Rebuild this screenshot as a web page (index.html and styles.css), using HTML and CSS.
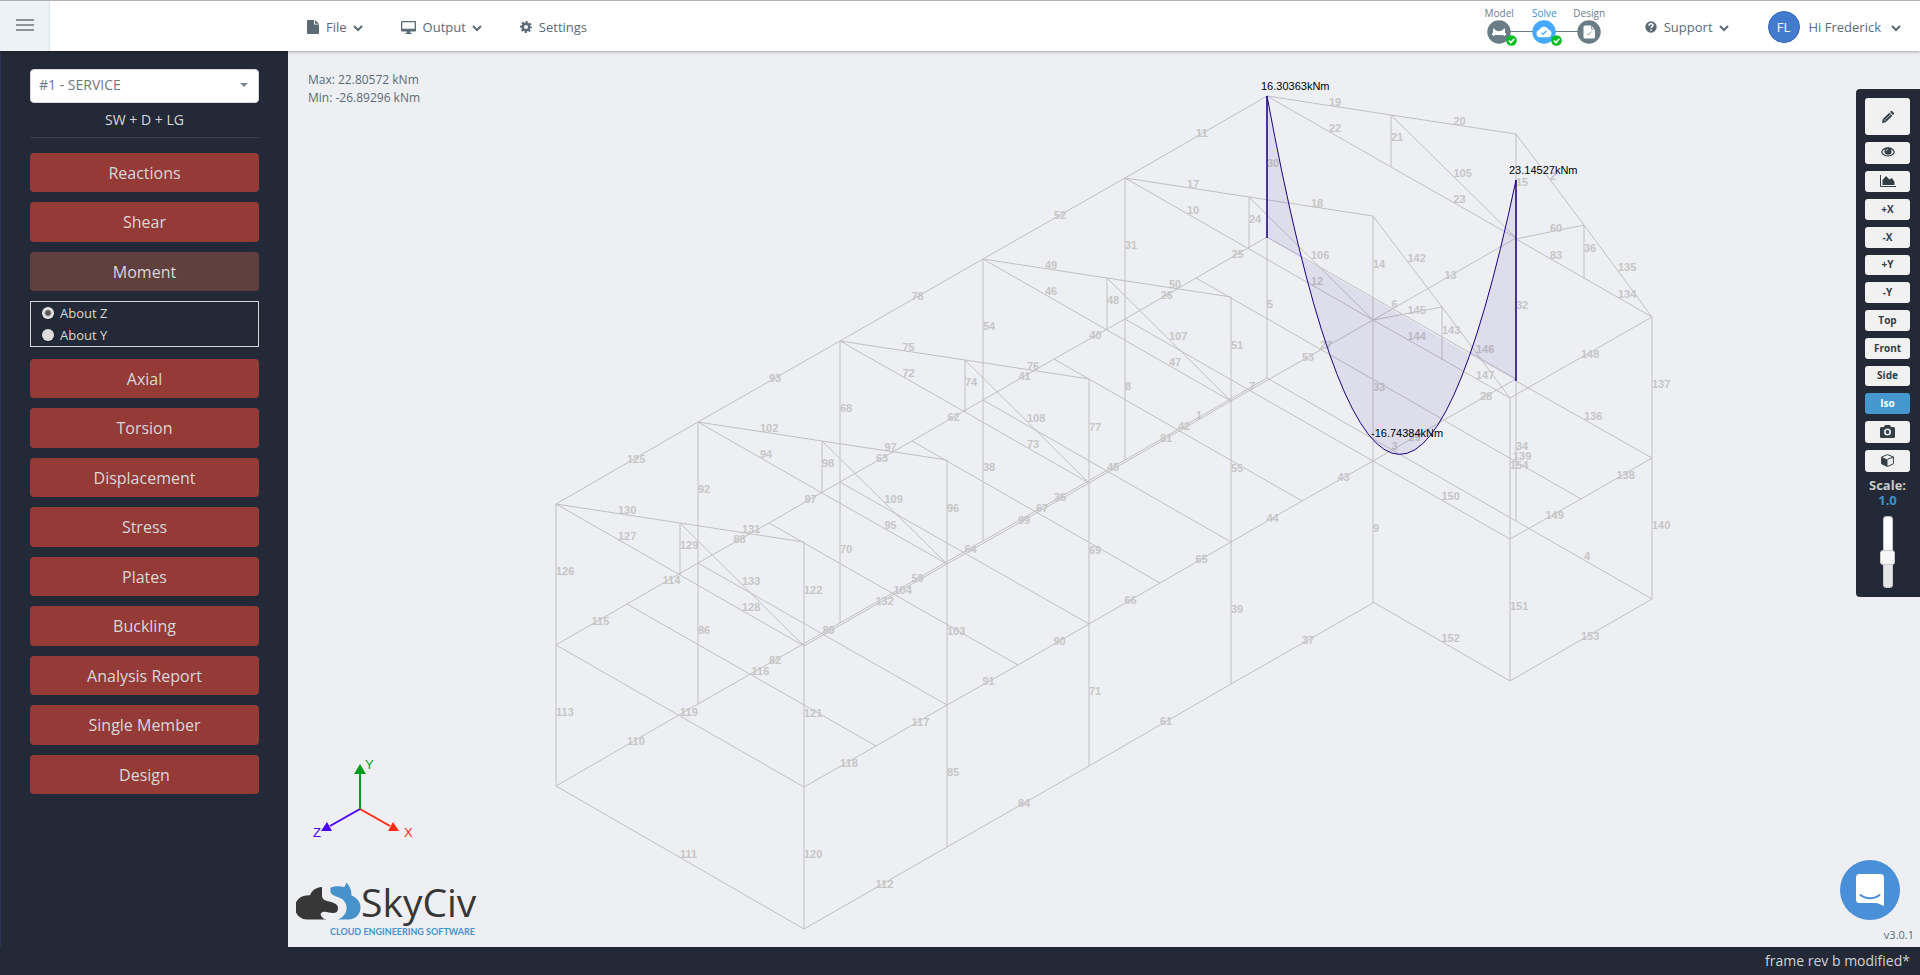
FILE: index.html
```html
<!DOCTYPE html>
<html lang="en">
<head>
  <meta charset="UTF-8">
  <meta name="viewport" content="width=device-width, initial-scale=1.0">
  <title>SkyCiv Structural 3D</title>
  <link rel="stylesheet" href="styles.css">
</head>
<body>

  <!-- shared icons -->
  <svg class="sprite" aria-hidden="true">
    <symbol id="chevron" viewBox="0 0 10 8"><path d="M1 2l4 4 4-4" fill="none" stroke="currentColor" stroke-width="2"/></symbol>
    <symbol id="tick" viewBox="0 0 11 11"><circle cx="5.500" cy="5.500" r="5.300" fill="#00be1f"/><path d="M2.800 5.500l2 2 3.500-3.600" fill="none" stroke="#fff" stroke-width="1.600"/></symbol>
  </svg>

  <header class="topbar">
    <button class="menu-toggle" aria-label="Toggle menu"><span></span><span></span><span></span></button>

    <nav class="menu">
      <a href="#">
        <svg width="12" height="14" viewBox="0 0 12 14"><path d="M1 0h6v4.500h5V13a1 1 0 0 1-1 1H1a1 1 0 0 1-1-1V1a1 1 0 0 1 1-1zM8 0l4 3.700H8z" fill="currentColor"/></svg>
        <span>File</span>
        <svg class="chevron" width="10" height="8"><use href="#chevron"/></svg>
      </a>
      <a href="#">
        <svg width="15" height="13" viewBox="0 0 15 13"><path d="M1 0h13a1 1 0 0 1 1 1v8.500a1 1 0 0 1-1 1H9l.5 1.500h1v1h-6v-1h1l.5-1.500H1a1 1 0 0 1-1-1V1a1 1 0 0 1 1-1zm.3 1.200v6.500h12.400V1.200z" fill="currentColor" fill-rule="evenodd"/></svg>
        <span>Output</span>
        <svg class="chevron" width="10" height="8"><use href="#chevron"/></svg>
      </a>
      <a href="#">
        <svg width="12" height="12" viewBox="0 0 12 12"><circle cx="6" cy="6" r="3.300" fill="none" stroke="currentColor" stroke-width="2.600"/><circle cx="6" cy="6" r="5" fill="none" stroke="currentColor" stroke-width="2" stroke-dasharray="2.100 1.827" stroke-dashoffset="1.050"/></svg>
        <span>Settings</span>
      </a>
    </nav>

    <div class="steps">
      <a class="step" href="#">
        <span>Model</span>
        <svg width="24" height="24" viewBox="0 0 24 24"><circle cx="12" cy="12" r="11.700" fill="currentColor"/><path d="M5 13h14v2H5zM6 8.500h1.500V16H6zM16.500 8.500H18V16h-1.500zM7.500 9.500q4.500 3.500 9 0v4h-9z" fill="#fff"/></svg>
        <svg class="tick" width="11" height="11"><use href="#tick"/></svg>
      </a>
      <a class="step active" href="#">
        <span>Solve</span>
        <svg width="24" height="24" viewBox="0 0 24 24"><circle cx="12" cy="12" r="11.700" fill="currentColor"/><path d="M8 17.200a3.600 3.600 0 0 1-.7-7.100 5 5 0 0 1 9.300-.3 3.800 3.800 0 0 1-.2 7.400z" fill="#fff"/><path d="M9.500 12.700l1.800 1.700 3.200-3.800" fill="none" stroke="currentColor" stroke-width="1.200"/></svg>
        <svg class="tick" width="11" height="11"><use href="#tick"/></svg>
      </a>
      <a class="step" href="#">
        <span>Design</span>
        <svg width="24" height="24" viewBox="0 0 24 24"><circle cx="12" cy="12" r="11.700" fill="currentColor"/><path d="M8 5.500h6l4 4v7.500a1.500 1.500 0 0 1-1.500 1.500H8A1.500 1.500 0 0 1 6.500 17V7A1.500 1.500 0 0 1 8 5.500z" fill="#fff"/><path d="M14.500 6v3H18M10 13.500l1.500 1.500 3-3.500" fill="none" stroke="currentColor" stroke-width=".8"/></svg>
      </a>
    </div>

    <a class="support" href="#">
      <svg width="12" height="12" viewBox="0 0 12 12"><circle cx="6" cy="6" r="5.700" fill="currentColor"/><path d="M4 4.700c0-2.700 4-2.600 4-.3 0 1.300-1.900 1.300-1.900 2.700M6.100 8.200v1.500" fill="none" stroke="#fff" stroke-width="1.500"/></svg>
      <span>Support</span>
      <svg class="chevron" width="10" height="8"><use href="#chevron"/></svg>
    </a>

    <a class="account" href="#">
      <span class="avatar">FL</span>
      <span>Hi Frederick</span>
      <svg class="chevron" width="10" height="8"><use href="#chevron"/></svg>
    </a>
  </header>

  <main class="workspace">
    <aside class="sidebar">
      <div class="load-combo">
        <select id="combo" aria-label="Load combination">
          <option>#1 - SERVICE</option>
        </select>
      </div>
      <p class="combo-desc">SW + D + LG</p>

      <div class="results">
        <button>Reactions</button>
        <button>Shear</button>
        <button class="selected">Moment</button>
        <div class="axis-choice" role="radiogroup" aria-label="Moment axis">
          <label><input type="radio" name="axis" checked>About Z</label>
          <label><input type="radio" name="axis">About Y</label>
        </div>
        <button>Axial</button>
        <button>Torsion</button>
        <button>Displacement</button>
        <button>Stress</button>
        <button>Plates</button>
        <button>Buckling</button>
        <button>Analysis Report</button>
        <button>Single Member</button>
        <button>Design</button>
      </div>
    </aside>

    <section class="viewer">
      <svg class="model" id="model">
        <g id="members"></g>
        <g id="member-ids"></g>
        <g id="diagram"></g>
      </svg>

      <div class="extremes">
        <div>Max: 22.80572 kNm</div>
        <div>Min: -26.89296 kNm</div>
      </div>

      <div class="branding">
        <svg class="triad" width="100" height="84" viewBox="0 0 100 84">
          <g stroke-width="2">
            <path d="M52 50L82 67" stroke="#ff2a12"/>
            <path d="M52 50L22 67" stroke="#4b00ff"/>
            <path d="M52 50V12" stroke="#069c1e"/>
          </g>
          <path d="M52 5l6 10H46z" fill="#069c1e"/>
          <path d="M85 63l6 9H80z" fill="#ff2a12"/>
          <path d="M19 63l5 9H13z" fill="#4b00ff"/>
          <text x="57" y="10" fill="#069c1e">Y</text>
          <text x="96" y="78" fill="#ff2a12">X</text>
          <text x="5" y="78" fill="#4b00ff">Z</text>
        </svg>

        <svg class="logo" width="190" height="68" viewBox="0 -8 190 68">
          <path d="M12 38.500a11.500 11.500 0 0 1-2-24 12 12 0 0 1 4-.2C16 9 20 6.500 26 6v9c0 4 5 5 9 6 5 1.500 7 3 7 6.500 0 3-2 4.500-5 4.500-4 0-7-2-10-1-3 .8-3 3-1 5 1 1 2 2.500 6 2.500z" fill="#373737"/>
          <path d="M42 38.500c7-3 10-9 8-15-2-6-7-7-12-9-3-1-4-4-3.500-7.500 2-2 9-2 14-1l2-4.500c2 3 5 5 5 13 5 2 9 6 9 12 0 7-5 12-12 12z" fill="#4792ca"/>
          <text class="logo-name" x="65" y="36">SkyCiv</text>
          <text class="logo-tag" x="34" y="54">CLOUD ENGINEERING SOFTWARE</text>
        </svg>
      </div>

      <div class="view-tools">
        <button class="edit" aria-label="Edit"><svg width="12" height="12" viewBox="0 0 12 12"><path d="M0 12l.7-3.700 6.600-6.600 3 3-6.600 6.600zM8 1l1-1h1l2 2v1l-1 1z" fill="currentColor"/><path d="M2 8.500l1.500 1.500M3.500 8.500l5-5" stroke="#f0f0f0" stroke-width=".7"/></svg></button>
        <button class="icon" aria-label="Visibility"><svg width="14" height="10" viewBox="0 0 14 10"><path d="M.6 5C3-.5 11-.5 13.400 5 11 10.300 3 10.300.6 5z" fill="none" stroke="currentColor" stroke-width="1.100"/><circle cx="7" cy="4.200" r="3.500" fill="currentColor"/><path d="M5.400 4c0-1 .6-1.600 1.600-1.600" fill="none" stroke="#f0f0f0" stroke-width=".8"/></svg></button>
        <button aria-label="Charts"><svg width="16" height="12" viewBox="0 0 16 12"><path d="M.5 0v11.500H16" fill="none" stroke="currentColor"/><path d="M2.500 10V5L6 1l3.500 3.500L12 3l2.500 4v3z" fill="currentColor"/></svg></button>
        <button>+X</button>
        <button>-X</button>
        <button>+Y</button>
        <button>-Y</button>
        <button>Top</button>
        <button>Front</button>
        <button>Side</button>
        <button class="on">Iso</button>
        <button class="icon" aria-label="Screenshot"><svg width="15" height="13" viewBox="0 0 15 13"><path d="M1.500 2H4l1-2h5l1 2h2.500A1.500 1.500 0 0 1 15 3.500v8a1.500 1.500 0 0 1-1.500 1.500h-12A1.500 1.500 0 0 1 0 11.500v-8A1.500 1.500 0 0 1 1.500 2z" fill="currentColor"/><circle cx="7.500" cy="7" r="2.700" fill="none" stroke="#f0f0f0" stroke-width="1.600"/></svg></button>
        <button class="icon" aria-label="3D render"><svg width="13" height="13" viewBox="0 0 13 13"><path d="M6.500.6L12.400 3v6.800l-5.900 2.700L.6 9.800V3z" fill="none" stroke="currentColor"/><path d="M.5 3l6 2.400v7L.5 9.800z" fill="currentColor"/><path d="M6.500 5.400L12.400 3" stroke="currentColor"/></svg></button>
        <label class="scale-label" for="scale">Scale:<output>1.0</output></label>
        <input class="scale" id="scale" type="range" min="0" max="2" step="0.1" value="0.8">
      </div>

      <button class="chat" aria-label="Open chat">
        <svg width="28" height="32" viewBox="0 0 28 32"><path d="M3.500 0h21A3.500 3.500 0 0 1 28 3.500V32c-3-1-5.500-3-9-3H3.500A3.500 3.500 0 0 1 0 25.500v-22A3.500 3.500 0 0 1 3.500 0z" fill="#fff"/><path d="M4.500 21c5 4.300 14 4.300 19 0" fill="none" stroke="#4a90d9" stroke-width="2" stroke-linecap="round"/></svg>
      </button>
      <div class="version">v3.0.1</div>
    </section>
  </main>

  <footer class="statusbar">frame rev b modified*</footer>

  <script src="model.js"></script>
</body>
</html>
```
FILE: styles.css
```css
* {
  box-sizing: border-box;
}

body {
  display: flex;
  flex-direction: column;
  height: 100vh;
  margin: 0;
  overflow: hidden;
  font-family: "Open Sans", sans-serif;
  font-size: 13px;
  line-height: 18px;
  color: #5a6b75;
  background-color: #232936;
}

a {
  color: inherit;
  text-decoration: none;
}

button {
  font-family: inherit;
  border: none;
  cursor: pointer;
}

svg {
  flex: none;
}

.sprite {
  position: absolute;
  width: 0;
  height: 0;
}

/* top bar */

.topbar {
  position: relative;
  z-index: 2;
  display: flex;
  align-items: center;
  height: 51px;
  background-color: #fff;
  border-top: 1px solid #b3b0b3;
  box-shadow: 0 1px 3px rgba(0, 0, 0, 0.3);
}

.menu-toggle {
  display: flex;
  flex-direction: column;
  align-items: center;
  justify-content: center;
  gap: 3px;
  width: 50px;
  height: 50px;
  padding: 0 0 2px;
  background-color: #ecf2f5;
  border-right: 1px solid #d8dfee;
}

.menu-toggle span {
  width: 18px;
  height: 2px;
  background-color: #8e9396;
}

.menu {
  display: flex;
  gap: 38px;
  margin-left: 257px;
}

.menu a,
.support,
.account {
  display: flex;
  align-items: center;
  gap: 7px;
  padding-top: 2px;
}

.chevron {
  margin: 2px 0 0 -1px;
}

.steps {
  position: relative;
  display: flex;
  height: 50px;
  margin-left: auto;
}

.steps::before {
  content: "";
  position: absolute;
  top: 30px;
  left: 22px;
  right: 22px;
  height: 1px;
  background-color: #6a7d87;
}

.step {
  position: relative;
  display: flex;
  flex-direction: column;
  align-items: center;
  width: 45px;
  padding-top: 5px;
  font-size: 10px;
  line-height: 14px;
  color: #6a7d87;
}

.step.active {
  color: #45aaff;
}

.step.active span {
  color: #3a90cc;
}

.step .tick {
  position: absolute;
  left: 29px;
  top: 34px;
}

.support {
  margin-left: 33px;
}

.account {
  gap: 9px;
  margin: 0 19px 0 39px;
}

.account .chevron {
  margin-left: 1px;
}

.avatar {
  width: 32px;
  height: 32px;
  border: 1px solid #3568b8;
  border-radius: 50%;
  line-height: 30px;
  text-align: center;
  color: #fff;
  background-color: #427bcd;
}

/* result buttons */

.workspace {
  display: flex;
  flex: 1;
  min-height: 0;
}

.sidebar {
  flex: none;
  width: 288px;
  padding: 18px 29px;
  border-left: 1px solid #2b3350;
  color: #d9d9d9;
}

.load-combo {
  position: relative;
}

.load-combo::after {
  content: "";
  position: absolute;
  top: 14px;
  right: 11px;
  border: 4px solid transparent;
  border-top-color: #7b878e;
}

.load-combo select {
  display: block;
  width: 100%;
  height: 34px;
  padding: 0 8px 3px;
  appearance: none;
  font-family: inherit;
  font-size: 14px;
  color: #6a7a83;
  background-color: #fff;
  border: 1px solid #d5d9dc;
  border-radius: 4px;
}

.combo-desc {
  margin: 6px 0 15px;
  padding-bottom: 6px;
  border-bottom: 1px solid #3b3d4c;
  font-size: 14px;
  line-height: 22px;
  text-align: center;
}

.results {
  display: flex;
  flex-direction: column;
  gap: 10px;
}

.results button {
  height: 39px;
  padding: 0;
  font-size: 16px;
  color: #dad7d7;
  background-color: #943a37;
  border-radius: 4px;
}

.results button:nth-child(even) {
  height: 40px;
}

.results .selected {
  background-color: #5f403f;
}

.axis-choice {
  margin-bottom: 2px;
  padding: 0 11px;
  border: 1px solid #d5d5d5;
}

.axis-choice label {
  display: flex;
  align-items: center;
  gap: 6px;
  height: 22px;
}

.axis-choice input {
  width: 12px;
  height: 12px;
  margin: 0;
  appearance: none;
  border-radius: 50%;
  background-color: #dedede;
}

.axis-choice input:checked {
  background: radial-gradient(circle, #555 2px, #e6e6e6 4px);
}

/* model viewer */

.viewer {
  position: relative;
  flex: 1;
  overflow: hidden;
  background-color: #eeeff3;
}

.model {
  position: absolute;
  width: 100%;
  height: 100%;
}

#members {
  stroke: #c0c0c0;
  stroke-width: 1;
}

#member-ids {
  font: bold 11px "Liberation Sans", Arial, sans-serif;
  fill: #c6c6c6;
}

#diagram {
  font: 11px "Liberation Sans", Arial, sans-serif;
}

.moment-area {
  fill: rgba(40, 10, 140, 0.08);
}

.moment-line {
  fill: none;
  stroke: #1f0080;
  stroke-width: 1;
}

.extremes {
  position: absolute;
  top: 20px;
  left: 20px;
  font-size: 12px;
}

.branding {
  position: absolute;
  left: 8px;
  bottom: 6px;
  display: flex;
  flex-direction: column;
  gap: 30px;
}

.triad {
  margin-left: 12px;
  overflow: visible;
  font: 13px "Liberation Sans", Arial, sans-serif;
}

.logo-name {
  font-size: 39px;
  fill: #373737;
}

.logo-tag {
  font: bold 9px Lato, sans-serif;
  fill: #4792ca;
}

.view-tools {
  position: absolute;
  top: 38px;
  right: 0;
  display: flex;
  flex-direction: column;
  align-items: center;
  gap: 7px;
  width: 64px;
  padding: 9px 10px 9px 9px;
  border-radius: 4px 0 0 4px;
  background-color: #232936;
}

.view-tools button {
  display: flex;
  align-items: center;
  justify-content: center;
  width: 45px;
  height: 21px;
  padding: 0 0 2px;
  border-radius: 3px;
  font-size: 10px;
  font-weight: bold;
  color: #333f44;
  background-color: #f1f1f1;
}

.view-tools button:nth-child(4n + 2) {
  height: 20px;
}

.view-tools .edit {
  height: 37px;
  padding: 0;
}

.view-tools .icon,
.view-tools .icon:nth-child(4n + 2) {
  height: 22px;
}

.view-tools .on {
  color: #fff;
  background-color: #4498ce;
}

.scale-label {
  display: flex;
  flex-direction: column;
  margin-top: -1px;
  font-weight: bold;
  line-height: 15px;
  text-align: center;
  color: #c8cacc;
}

.scale-label output {
  color: #3e93ca;
}

.scale {
  width: 15px;
  height: 72px;
  margin: 1px 0 0;
  appearance: none;
  writing-mode: vertical-lr;
  direction: rtl;
  background: none;
}

.scale::-webkit-slider-runnable-track {
  width: 10px;
  height: 72px;
  border: 1px solid #c8c8c8;
  border-radius: 3px;
  background: linear-gradient(#fff 50%, #e6e6e6 50%);
}

.scale::-webkit-slider-thumb {
  appearance: none;
  width: 15px;
  height: 15px;
  margin-left: -4px;
  border: 1px solid #c8c8c8;
  border-radius: 3px;
  background-color: #f6f6f6;
}

.chat {
  position: absolute;
  right: 20px;
  bottom: 27px;
  display: flex;
  align-items: center;
  justify-content: center;
  width: 60px;
  height: 60px;
  border-radius: 50%;
  background-color: #4a90d9;
}

.version {
  position: absolute;
  right: 6px;
  bottom: 3px;
  font-size: 11px;
}

.statusbar {
  height: 28px;
  padding: 0 10px;
  font-size: 14px;
  line-height: 28px;
  text-align: right;
  color: #d0d2d4;
}
```
FILE: model.js
```js
const SVG_NS = 'http://www.w3.org/2000/svg';
const membersEl = document.getElementById('members');
const idsEl = document.getElementById('member-ids');
const diagramEl = document.getElementById('diagram');

// isometric screen offsets of one bay
const BAY_X = 142.22;
const BAY_Y = -81.6;

function add(parent, tag, attrs, text) {
  const el = document.createElementNS(SVG_NS, tag);
  for (const key in attrs) {
    el.setAttribute(key, attrs[key]);
  }
  if (text) {
    el.textContent = text;
  }
  parent.appendChild(el);
}

// point (x, y) of the first frame, moved back by a number of bays
function at(x, y, bays) {
  return [Math.round(x + BAY_X * bays), Math.round(y + BAY_Y * bays)];
}

function member(id, a, b) {
  add(membersEl, 'line', { x1: a[0], y1: a[1], x2: b[0], y2: b[1] });
  add(idsEl, 'text', { x: (a[0] + b[0]) / 2, y: (a[1] + b[1]) / 2 }, String(id));
}

const leftTop = k => at(268, 453, k);
const leftMid = k => at(268, 594, k);
const leftBase = k => at(268, 735, k);
const ridge = k => at(392.2, 472, k);
const ceiling = k => at(392.2, 524, k);
const rightTop = k => at(516.45, 491, k);
const eave = k => at(516.45, 595, k);
const rightMid = k => at(516.45, 736, k);
const rightBase = k => at(516.45, 878, k);

// roof truss: two rafters, post, two ceiling chords, brace
// then left columns, right columns, floor beam
const frames = [
  [130, 131, 129, 127, 128, 133, 126, 113, 122, 121, 120, 119],
  [102, 97, 98, 94, 95, 109, 92, 86, 96, 103, 85, 89],
  [75, 76, 74, 72, 73, 108, 68, 70, 77, 69, 71, 64],
  [49, 50, 48, 46, 47, 107, 54, 38, 51, 55, 39, 45],
  [17, 18, 24, 10, 12, 106, 31, 8, 14, 33, 9, 7],
  [19, 20, 21, 22, 23, 105, 30, 5, 15, 32, 34, 6]
];

frames.forEach((ids, k) => {
  member(ids[0], leftTop(k), ridge(k));
  member(ids[1], ridge(k), rightTop(k));
  member(ids[2], ridge(k), ceiling(k));
  member(ids[3], leftTop(k), ceiling(k));
  member(ids[4], ceiling(k), eave(k));
  member(ids[5], ridge(k), eave(k));
  member(ids[6], leftTop(k), leftMid(k));
  member(ids[7], leftMid(k), leftBase(k));
  member(ids[8], rightTop(k), eave(k));
  member(ids[9], eave(k), rightMid(k));
  member(ids[10], rightMid(k), rightBase(k));
  member(ids[11], leftMid(k), rightMid(k));
});

// members running along the building, one per bay
[125, 93, 78, 52, 11].forEach((id, k) => member(id, leftTop(k), leftTop(k + 1)));
[110, 82, 59, 35, 1].forEach((id, k) => member(id, leftBase(k), leftBase(k + 1)));
[132, 99, 81, 53, 13].forEach((id, k) => member(id, eave(k), eave(k + 1)));
[112, 84, 61, 37].forEach((id, k) => member(id, rightBase(k), rightBase(k + 1)));

// floor edges are split at mid bay
[115, 114, 88, 87, 63, 62, 41, 40, 26, 25].forEach((id, i) => member(id, leftMid(i / 2), leftMid(i / 2 + 0.5)));
[118, 117, 91, 90, 66, 65, 44, 43, 29, 28].forEach((id, i) => member(id, rightMid(i / 2), rightMid(i / 2 + 0.5)));
[116, 104, 67, 42, 27].forEach((id, k) => member(id, leftMid(k + 0.5), rightMid(k + 0.5)));

member(111, leftBase(0), rightBase(0));
member(3, leftBase(5), rightBase(5));

// side extension between the last two frames
[
  [2, 1228, 83, 1296, 174],
  [135, 1296, 174, 1364, 266],
  [60, 1228, 188, 1296, 174],
  [36, 1296, 174, 1296, 228],
  [83, 1228, 188, 1296, 227],
  [134, 1296, 227, 1364, 266],
  [142, 1085, 165, 1154, 256],
  [146, 1154, 256, 1222, 347],
  [145, 1085, 269, 1154, 256],
  [143, 1154, 256, 1154, 309],
  [144, 1085, 269, 1154, 308],
  [147, 1154, 308, 1222, 347],
  [148, 1222, 347, 1364, 266],
  [154, 1222, 347, 1222, 488],
  [151, 1222, 488, 1222, 630],
  [137, 1364, 266, 1364, 407],
  [140, 1364, 407, 1364, 548],
  [136, 1228, 330, 1364, 407],
  [138, 1364, 407, 1293, 448],
  [149, 1293, 448, 1222, 488],
  [139, 1157, 370, 1293, 448],
  [150, 1085, 410, 1222, 488],
  [152, 1085, 551, 1222, 630],
  [153, 1222, 630, 1364, 548],
  [4, 1228, 470, 1364, 548]
].forEach(([id, x1, y1, x2, y2]) => member(id, [x1, y1], [x2, y2]));

// bending moment of member 6
add(diagramEl, 'path', { class: 'moment-area', d: 'M979 187V45Q1103.500 717 1228 129V330Z' });
add(diagramEl, 'path', { class: 'moment-line', d: 'M979 187V45Q1103.500 717 1228 129V330' });
add(diagramEl, 'path', { class: 'moment-line', d: 'M979 187V45M1228 129V330' });
add(diagramEl, 'text', { x: 973, y: 39 }, '16.30363kNm');
add(diagramEl, 'text', { x: 1221, y: 123 }, '23.14527kNm');
add(diagramEl, 'text', { x: 1083, y: 386 }, '-16.74384kNm');
```
